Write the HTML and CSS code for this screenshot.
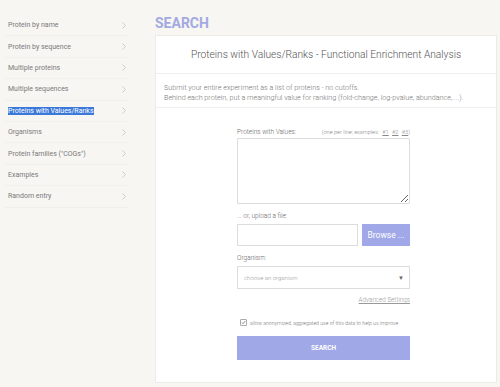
FILE: index.html
```html
<!DOCTYPE html>
<html lang="en">
<head>
    <meta charset="UTF-8">
    <title>Search - Proteins with Values/Ranks</title>
    <link rel="stylesheet" href="styles.css">
</head>
<body>
    <div class="page">
        <ul class="sidebar">
            <li><span>Protein by name</span><svg class="chev" viewBox="0 0 4 7"><path d="M0.5 0.5 L3.5 3.5 L0.5 6.5"/></svg></li>
            <li><span>Protein by sequence</span><svg class="chev" viewBox="0 0 4 7"><path d="M0.5 0.5 L3.5 3.5 L0.5 6.5"/></svg></li>
            <li><span>Multiple proteins</span><svg class="chev" viewBox="0 0 4 7"><path d="M0.5 0.5 L3.5 3.5 L0.5 6.5"/></svg></li>
            <li><span>Multiple sequences</span><svg class="chev" viewBox="0 0 4 7"><path d="M0.5 0.5 L3.5 3.5 L0.5 6.5"/></svg></li>
            <li class="active"><span>Proteins with Values/Ranks</span><svg class="chev" viewBox="0 0 4 7"><path d="M0.5 0.5 L3.5 3.5 L0.5 6.5"/></svg></li>
            <li><span>Organisms</span><svg class="chev" viewBox="0 0 4 7"><path d="M0.5 0.5 L3.5 3.5 L0.5 6.5"/></svg></li>
            <li><span>Protein families ("COGs")</span><svg class="chev" viewBox="0 0 4 7"><path d="M0.5 0.5 L3.5 3.5 L0.5 6.5"/></svg></li>
            <li><span>Examples</span><svg class="chev" viewBox="0 0 4 7"><path d="M0.5 0.5 L3.5 3.5 L0.5 6.5"/></svg></li>
            <li><span>Random entry</span><svg class="chev" viewBox="0 0 4 7"><path d="M0.5 0.5 L3.5 3.5 L0.5 6.5"/></svg></li>
        </ul>

        <div class="main">
            <h1>SEARCH</h1>
            <div class="card">
                <div class="card-title">Proteins with Values/Ranks - Functional Enrichment Analysis</div>
                <div class="card-desc">
                    Submit your entire experiment as a list of proteins - no cutoffs.<br>
                    Behind each protein, put a meaningful value for ranking (fold-change, log-pvalue, abundance, ...).
                </div>
                <form class="form">
                    <div class="label-row">
                        <label for="values">Proteins with Values:</label>
                        <span class="hint">(one per line; examples: <a href="#">#1</a> <a href="#">#2</a> <a href="#">#3</a>)</span>
                    </div>
                    <textarea id="values"></textarea>

                    <label class="label">... or, upload a file:</label>
                    <div class="file-row">
                        <input type="text" class="file-name">
                        <button type="button" class="browse">Browse ...</button>
                    </div>

                    <label class="label">Organism:</label>
                    <div class="select">
                        <span>choose an organism</span>
                        <span class="arrow">&#9660;</span>
                    </div>

                    <div class="advanced"><a href="#">Advanced Settings</a></div>

                    <label class="consent">
                        <span class="check"><svg viewBox="0 0 7 7"><path d="M1.3 3.6 L2.9 5.2 L5.8 1.6"/></svg></span>
                        <span>allow anonymized, aggregated use of this data to help us improve</span>
                    </label>

                    <button type="button" class="search-btn">SEARCH</button>
                </form>
            </div>
        </div>
    </div>
</body>
</html>
```

FILE: styles.css
```css
body {
    margin: 0;
    background: #f7f6f2;
    font-family: Roboto, 'Liberation Sans', sans-serif;
    color: #777;
}
.page {
    display: flex;
    align-items: flex-start;
}
.sidebar {
    list-style: none;
    margin: 0;
    padding: 15px 0 0 5px;
    width: 124px;
    flex-shrink: 0;
}
.sidebar li {
    height: 21.4px;
    display: flex;
    align-items: center;
    justify-content: space-between;
    padding: 0 3px 0 3px;
    font-size: 7px;
    color: #7a7a7a;
    border-bottom: 1px solid #f1f0ec;
    box-sizing: border-box;
}
.sidebar li.active span {
    background: #3a78da;
    color: #fff;
}
.chev {
    width: 4px;
    height: 7px;
    fill: none;
    stroke: #c2c2c2;
    stroke-width: 0.8;
}
.main {
    margin-left: 26px;
    width: 342px;
}
h1 {
    margin: 14px 0 3px;
    font-size: 14px;
    line-height: 18px;
    font-weight: 700;
    color: #a3a9e1;
}
.card {
    background: #fff;
    border: 1px solid #ecebe6;
    height: 348px;
    box-sizing: border-box;
}
.card-title {
    height: 37px;
    display: flex;
    align-items: center;
    justify-content: center;
    font-size: 10.2px;
    font-weight: 300;
    color: #555;
    border-bottom: 1px solid #efeeea;
}
.card-desc {
    padding: 9px 8px 0;
    height: 34px;
    box-sizing: border-box;
    font-size: 7.2px;
    font-weight: 300;
    line-height: 10px;
    color: #777;
    border-bottom: 1px solid #efeeea;
}
.form {
    width: 173px;
    margin: 20px 0 0 81px;
}
.label-row {
    display: flex;
    justify-content: space-between;
    align-items: baseline;
    height: 10px;
}
.label-row label, .label {
    font-size: 6.5px;
    font-weight: 300;
    color: #666;
}
.label {
    display: block;
    margin: 8px 0 4px;
}
.hint {
    font-size: 5.6px;
    font-weight: 300;
    color: #888;
}
.hint a {
    color: #888;
    margin-left: 2px;
}
textarea {
    display: block;
    width: 100%;
    height: 66px;
    margin: 0;
    box-sizing: border-box;
    border: 1px solid #dcdcdc;
    border-radius: 1px;
    resize: vertical;
}
.file-row {
    display: flex;
    gap: 4px;
    height: 22px;
}
.file-name {
    flex: 1;
    min-width: 0;
    width: 0;
    margin: 0;
    padding: 0;
    border: 1px solid #dcdcdc;
    box-sizing: border-box;
}
.browse {
    flex: none;
    width: 48px;
    border: none;
    background: #a0a8e8;
    color: #fff;
    font-family: inherit;
    font-size: 8.5px;
    white-space: nowrap;
    padding: 0;
}
.select {
    height: 23px;
    border: 1px solid #dcdcdc;
    box-sizing: border-box;
    display: flex;
    justify-content: space-between;
    align-items: center;
    padding: 0 5px 0 6px;
    font-size: 6px;
    font-weight: 300;
    color: #999;
}
.select .arrow {
    font-size: 6px;
    color: #666;
}
.advanced {
    text-align: right;
    margin-top: 7px;
    font-size: 6.3px;
    font-weight: 300;
}
.advanced a {
    color: #999;
}
.consent {
    display: flex;
    align-items: center;
    margin: 15px 0 0 3px;
    font-size: 5.2px;
    font-weight: 300;
    color: #777;
}
.check {
    width: 7px;
    height: 7px;
    margin-right: 3px;
    border: 1px solid #aaa;
    border-radius: 1px;
    box-sizing: border-box;
    display: flex;
}
.check svg {
    width: 100%;
    height: 100%;
    fill: none;
    stroke: #555;
    stroke-width: 1;
}
.search-btn {
    display: block;
    width: 100%;
    height: 24px;
    margin-top: 10px;
    border: none;
    background: #a0a8e8;
    color: #fff;
    font-family: inherit;
    font-weight: 700;
    font-size: 6.5px;
}
```
